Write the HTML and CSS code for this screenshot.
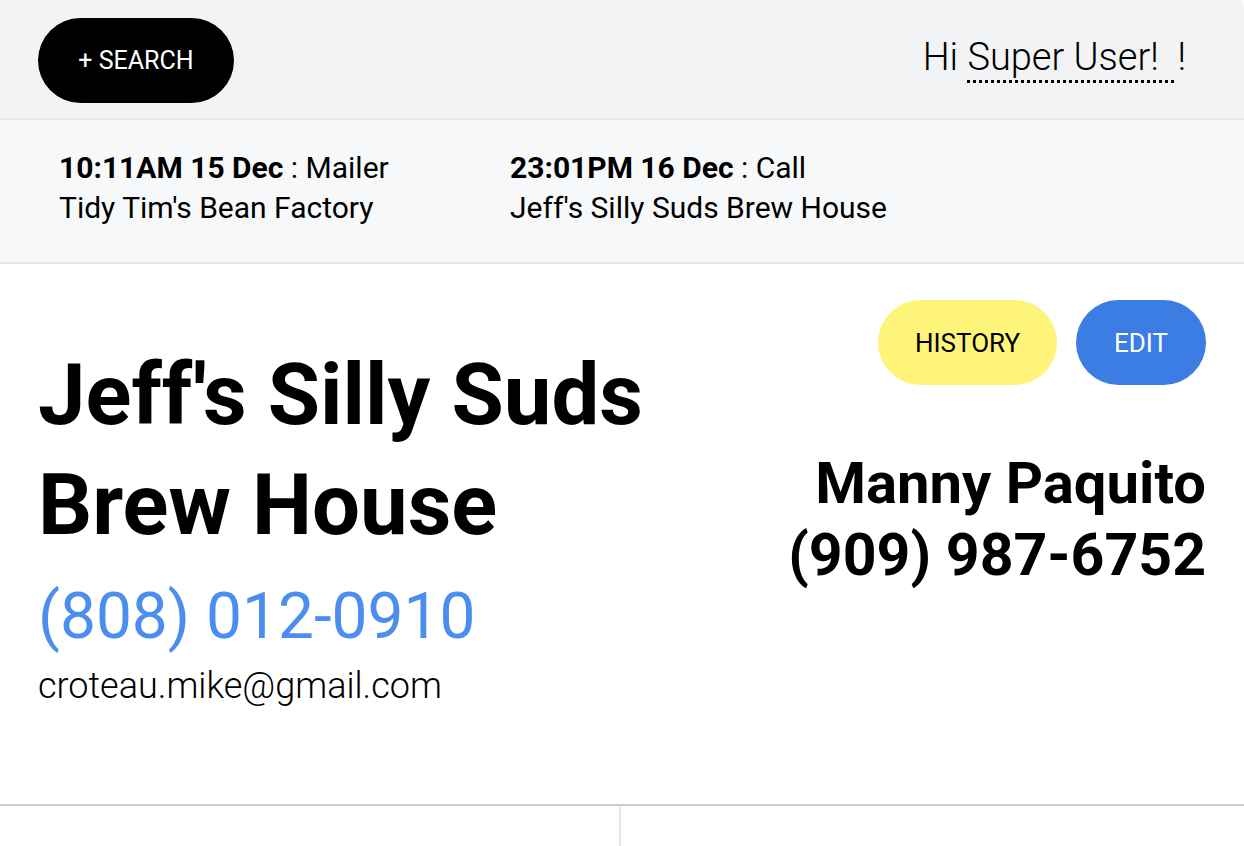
FILE: index.html
```html
<!DOCTYPE html>
<html>
<head>
<meta charset="utf-8">
<link rel="stylesheet" href="styles.css">
</head>
<body>
<div class="page">
  <header class="topbar">
    <button class="search-btn">+ SEARCH</button>
    <div class="greeting">Hi <span class="user">Super User!&nbsp;&nbsp;</span>!</div>
  </header>
  <section class="recent">
    <div class="recent-item">
      <div><b>10:11AM 15 Dec</b> : Mailer</div>
      <div>Tidy Tim's Bean Factory</div>
    </div>
    <div class="recent-item">
      <div><b>23:01PM 16 Dec</b> : Call</div>
      <div>Jeff's Silly Suds Brew House</div>
    </div>
  </section>
  <main class="detail">
    <div class="detail-left">
      <h1 class="company">Jeff's Silly Suds Brew House</h1>
      <div class="company-phone">(808) 012-0910</div>
      <div class="company-email">croteau.mike@gmail.com</div>
    </div>
    <div class="detail-right">
      <div class="actions">
        <button class="btn btn-history">HISTORY</button>
        <button class="btn btn-edit">EDIT</button>
      </div>
      <div class="contact-name">Manny Paquito</div>
      <div class="contact-phone">(909) 987-6752</div>
    </div>
  </main>
  <section class="panels">
    <div class="panel panel-left"></div>
    <div class="panel"></div>
  </section>
</div>
</body>
</html>
```

FILE: styles.css
```css
* { box-sizing: border-box; }
html, body { margin: 0; padding: 0; background: #fff; }
body { font-family: Roboto, "Liberation Sans", sans-serif; color: #000; width: 1244px; height: 846px; overflow: hidden; }
.page { width: 1244px; }

.topbar {
  height: 120px;
  background: #f2f3f5;
  border-bottom: 2px solid #e4e5e8;
  border-top-right-radius: 6px;
  display: flex;
  align-items: center;
  justify-content: space-between;
  padding: 0 58px 0 38px;
}
.search-btn {
  width: 196px;
  height: 85px;
  margin-top: 2px;
  border: none;
  border-radius: 43px;
  background: #000;
  color: #fff;
  font-family: Roboto, sans-serif;
  font-size: 25px;
  font-weight: 400;
  padding: 0;
}
.greeting {
  font-size: 38px;
  font-weight: 300;
  line-height: 44px;
  margin-top: 0;
}
.user {
  display: inline-block;
  padding-bottom: 4px;
  background-image: repeating-linear-gradient(to right, #000 0 3px, transparent 3px 6px);
  background-size: 100% 3px;
  background-position: left bottom;
  background-repeat: no-repeat;
  line-height: 44px;
  vertical-align: top;
}

.recent {
  height: 144px;
  background: #f7f8fa;
  border-bottom: 2px solid #e3e4e6;
  display: flex;
  padding: 28px 0 0 59px;
  font-size: 30px;
  line-height: 40px;
}
.recent-item { width: 451px; }
.recent-item b { font-weight: 700; }

.detail {
  height: 542px;
  display: flex;
  justify-content: space-between;
  padding: 36px 38px 0 38px;
  border-bottom: 2px solid #cccccc;
}
.company {
  margin: 40px 0 0 0;
  font-size: 85px;
  font-weight: 700;
  line-height: 110px;
  width: 660px;
}
.company-phone {
  font-size: 64px;
  color: #4b8ef0;
  line-height: 78px;
  margin-top: 18px;
}
.company-email {
  font-size: 36px;
  font-weight: 300;
  line-height: 44px;
  margin-top: 8px;
}
.detail-right {
  display: flex;
  flex-direction: column;
  align-items: flex-end;
}
.actions { display: flex; gap: 19px; }
.btn {
  height: 85px;
  border: none;
  border-radius: 43px;
  font-family: Roboto, sans-serif;
  font-size: 26px;
  font-weight: 400;
  padding: 0;
}
.btn-history { width: 179px; background: #fff47a; color: #000; }
.btn-edit { width: 130px; background: #3b7de3; color: #fff; }
.contact-name, .contact-phone {
  font-size: 58px;
  font-weight: 700;
  line-height: 72px;
}
.contact-phone { font-size: 59px; }
.contact-name { margin-top: 62px; }

.panels { display: flex; height: 42px; }
.panel { flex: 1; }
.panel-left { flex: 0 0 621px; border-right: 2px solid #e6e6e6; }
```
